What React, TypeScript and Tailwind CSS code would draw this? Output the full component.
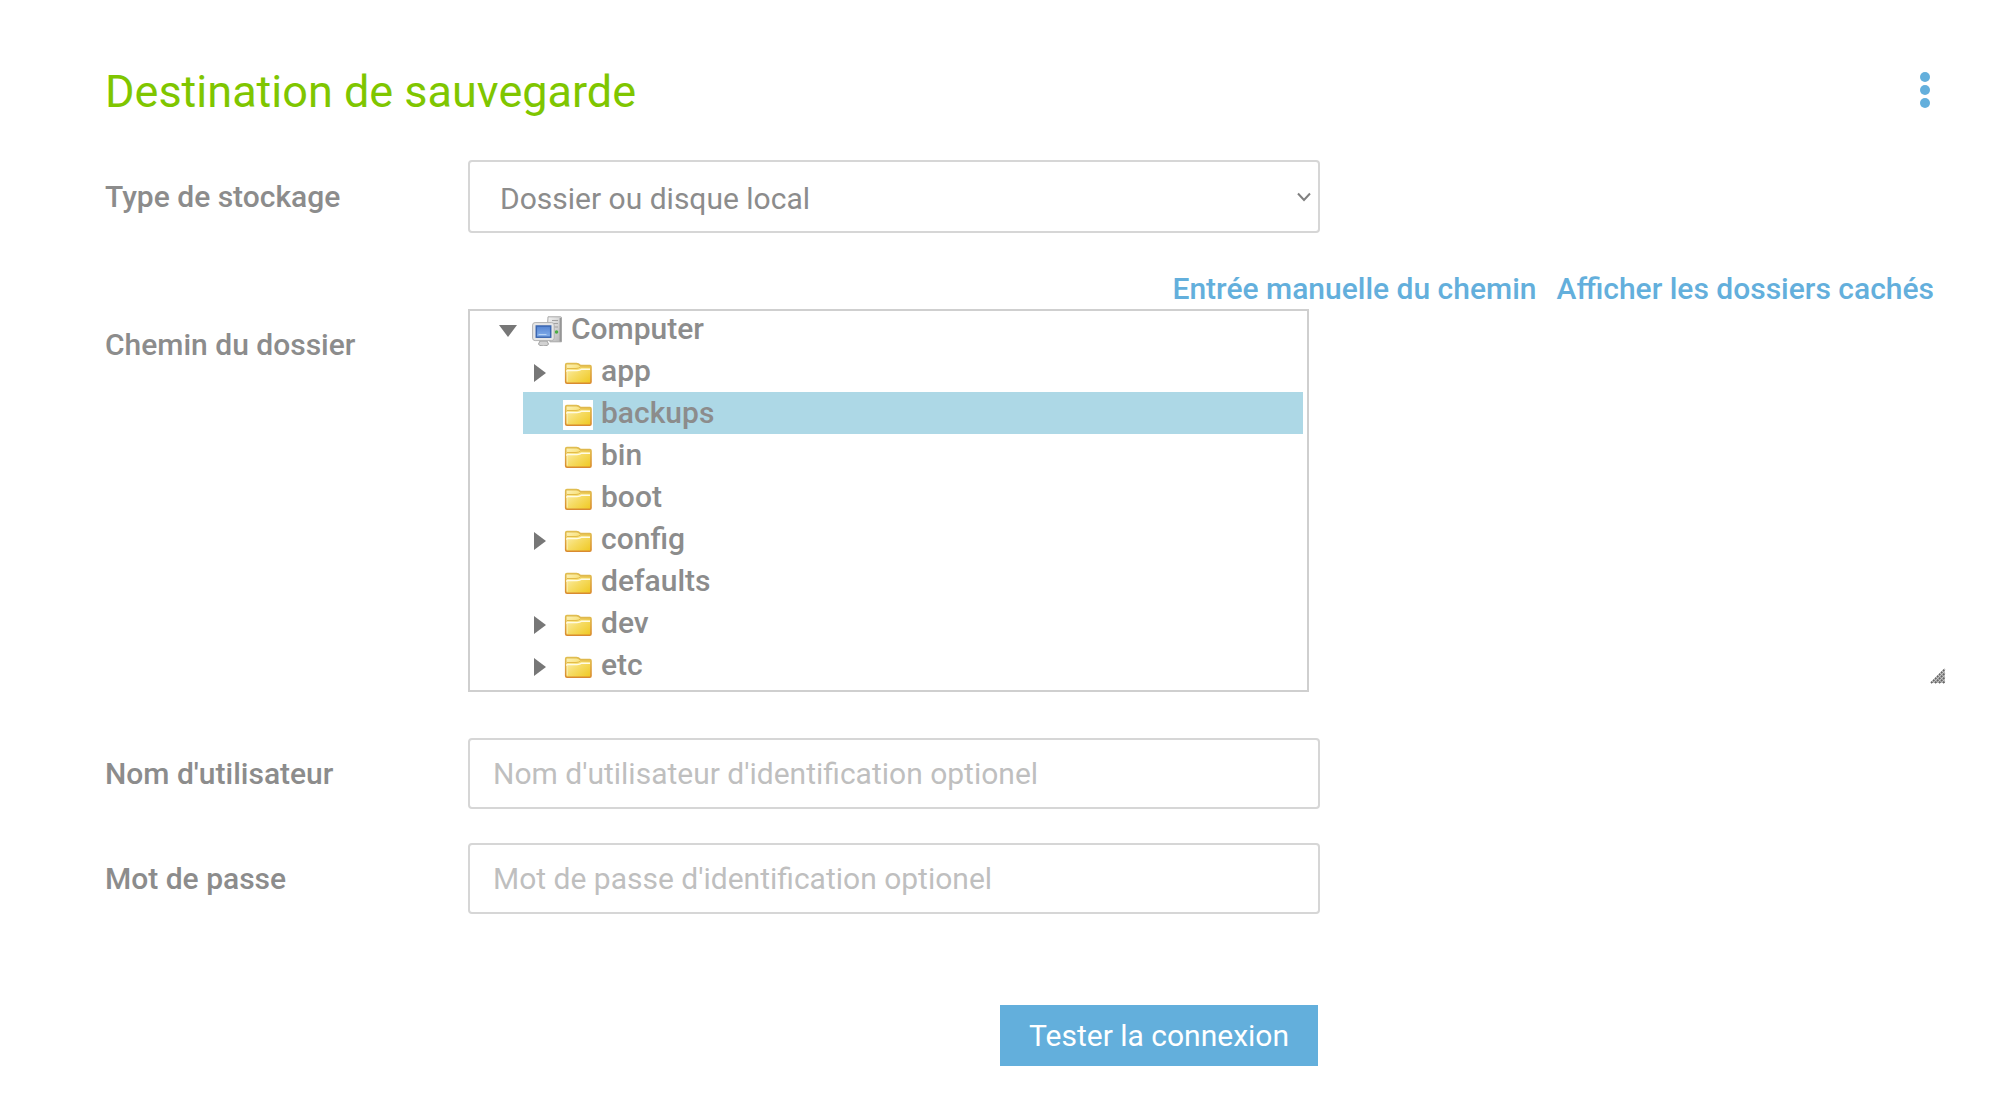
import React, { useState } from 'react';

interface Folder {
  name: string;
  hasChildren: boolean;
}

const folders: Folder[] = [
  { name: 'app', hasChildren: true },
  { name: 'backups', hasChildren: false },
  { name: 'bin', hasChildren: false },
  { name: 'boot', hasChildren: false },
  { name: 'config', hasChildren: true },
  { name: 'defaults', hasChildren: false },
  { name: 'dev', hasChildren: true },
  { name: 'etc', hasChildren: true },
];

const ComputerIcon = () => (
  <svg viewBox="0 0 30 30" className="h-[30px] w-[30px] shrink-0" aria-hidden="true">
    <defs>
      <linearGradient id="case" x1="0" y1="0" x2="1" y2="1">
        <stop offset="0" stopColor="#f4f4f4" />
        <stop offset="1" stopColor="#b4b4b4" />
      </linearGradient>
      <linearGradient id="screen" x1="0" y1="0" x2="0" y2="1">
        <stop offset="0" stopColor="#5584d2" />
        <stop offset="1" stopColor="#85b0ec" />
      </linearGradient>
    </defs>
    <path d="M16 .8h12.5q1 0 1 1v24H18L15 20z" fill="url(#case)" stroke="#a8a8a8" />
    <path d="M28.3 2v23.5" stroke="#969696" strokeWidth="1.4" />
    <path d="M20 4.5h6M20 7.5h6M22 11h4" stroke="#a2a2a2" strokeWidth="1.2" />
    <circle cx="24.5" cy="16" r="1.8" fill="#4aad43" />
    <path d="M8 25h7l1.5 3q0 2-5 2t-5-2z" fill="#d2d2d2" stroke="#a0a0a0" />
    <rect x=".6" y="6.6" width="21.6" height="18" rx="2.5" fill="#e6e6e6" stroke="#b2b2b2" />
    <rect x="4.3" y="10" width="14.4" height="11.2" fill="url(#screen)" stroke="#3b66b0" strokeWidth="1.5" />
    <path d="M6.5 18.5h8" stroke="#b7d3f5" strokeWidth="1" />
  </svg>
);

const FolderIcon = () => (
  <svg viewBox="0 0 30 30" className="h-[30px] w-[30px] shrink-0 bg-white" aria-hidden="true">
    <defs>
      <linearGradient id="folder" x1="0" y1="0" x2="1" y2="1">
        <stop offset="0" stopColor="#fdf3bd" />
        <stop offset=".5" stopColor="#f6dc66" />
        <stop offset="1" stopColor="#efc81f" />
      </linearGradient>
      <linearGradient id="folderEdge" x1="0" y1="0" x2="0" y2="1">
        <stop offset="0" stopColor="#e0bd50" />
        <stop offset="1" stopColor="#d98a30" />
      </linearGradient>
    </defs>
    <path
      d="M2.7 24V6.8Q2.7 5.6 3.9 5.6H13.5Q15.5 5.6 17.5 7.6H27Q28 7.6 28 8.8V24Q28 25.2 26.8 25.2H4Q2.7 25.2 2.7 24Z"
      fill="url(#folder)"
      stroke="url(#folderEdge)"
      strokeWidth="1.6"
    />
    <path d="M4 10.5H13Q15.5 10.5 17.5 9H27" fill="none" stroke="#e3bb48" />
    <path d="M4 14V12.6H14Q17 12.6 18.5 11.3H27" fill="none" stroke="#fffbe4" strokeWidth="1.4" />
    <path d="M4.2 13V23.5" stroke="#fdf0b0" />
  </svg>
);

interface ArrowProps {
  open: boolean;
}

const Arrow: React.FC<ArrowProps> = ({ open }) => (
  <svg viewBox="0 0 20 20" className="h-5 w-5" fill="#777" aria-hidden="true">
    <path d={open ? 'M1 4H19L10 16Z' : 'M5 1L17 10L5 19Z'} />
  </svg>
);

interface TextRowProps {
  id: string;
  label: string;
  type: string;
  placeholder: string;
}

const TextRow: React.FC<TextRowProps> = ({ id, label, type, placeholder }) => (
  <div className="flex items-center">
    <label htmlFor={id} className="w-[363px] shrink-0 font-medium">{label}</label>
    <input
      id={id}
      type={type}
      placeholder={placeholder}
      className="h-[71px] w-full max-w-[852px] rounded-sm border-2 border-[#d6d6d6] bg-white px-[23px] placeholder:text-[#bfbfbf] placeholder:opacity-100"
    />
  </div>
);

const App = () => {
  const [selected, setSelected] = useState('backups');
  const [isOpen, setIsOpen] = useState(true);

  return (
    <main className="bg-white pt-[62px] pr-[54px] pb-10 pl-[105px] font-['Roboto',sans-serif] text-[30px] leading-10 text-[#8c8c8c]">
      <header className="flex items-center justify-between pr-4">
        <h1 className="text-[45px] leading-[60px] text-[#7fc600]">Destination de sauvegarde</h1>
        <button type="button" aria-label="Menu" className="mb-1 flex flex-col gap-[3px] text-[#63afdc]">
          <span className="h-[10px] w-[10px] rounded-full bg-current" />
          <span className="h-[10px] w-[10px] rounded-full bg-current" />
          <span className="h-[10px] w-[10px] rounded-full bg-current" />
        </button>
      </header>

      <form className="mt-[38px]" onSubmit={e => e.preventDefault()}>
        <div className="flex items-center">
          <label htmlFor="storage" className="w-[363px] shrink-0 font-medium">Type de stockage</label>
          <div className="relative w-full max-w-[852px]">
            <select
              id="storage"
              className="block h-[73px] w-full appearance-none rounded-sm border-2 border-[#d6d6d6] bg-white pt-1 pr-10 pl-[30px]"
            >
              <option>Dossier ou disque local</option>
            </select>
            <svg
              viewBox="0 0 14 10"
              className="pointer-events-none absolute top-8 right-[9px] h-[10px] w-[14px]"
              fill="none"
              stroke="#808080"
              strokeWidth={2}
              aria-hidden="true"
            >
              <path d="M1 1.5L7 8L13 1.5" />
            </svg>
          </div>
        </div>

        <div className="mt-9 flex">
          <span id="path-label" className="w-[363px] shrink-0 pt-14 font-medium">Chemin du dossier</span>
          <div className="flex-1">
            <div className="flex justify-end gap-5 pr-3 font-medium text-[#63afdc]">
              <a href="#manual">Entrée manuelle du chemin</a>
              <a href="#hidden">Afficher les dossiers cachés</a>
            </div>
            <div className="flex items-end justify-between">
              <div
                role="tree"
                aria-labelledby="path-label"
                className="w-full max-w-[841px] border-2 border-[#cfcfcf] pr-1 pb-1 pl-[22px] font-medium"
              >
                <div role="treeitem" aria-expanded={isOpen} className="flex h-[39px] items-center">
                  <button
                    type="button"
                    aria-label="Computer"
                    className="w-10 pl-[6px]"
                    onClick={() => setIsOpen(!isOpen)}
                  >
                    <Arrow open={isOpen} />
                  </button>
                  <ComputerIcon />
                  <span className="pb-1 pl-[9px]">Computer</span>
                </div>
                {isOpen && (
                  <ul role="group" className="pl-[31px]">
                    {folders.map(folder => (
                      <li
                        key={folder.name}
                        role="treeitem"
                        aria-selected={folder.name === selected}
                        onClick={() => setSelected(folder.name)}
                        className={`flex h-[42px] cursor-pointer items-center ${
                          folder.name === selected ? 'bg-[#add8e6]' : ''
                        }`}
                      >
                        <span className="flex w-10 shrink-0 items-center pt-1 pl-[6px]">
                          {folder.hasChildren && <Arrow open={false} />}
                        </span>
                        <span className="shrink-0 pt-1">
                          <FolderIcon />
                        </span>
                        <span className="pl-2">{folder.name}</span>
                      </li>
                    ))}
                  </ul>
                )}
              </div>
              <svg viewBox="0 0 16 16" className="mb-2 h-4 w-4 shrink-0" fill="none" aria-hidden="true">
                <path d="M15 1V15H1Z" fill="#c4c4c4" />
                <path d="M1 15L15 1M5 15L15 5M9 15L15 9M13 15L15 13" stroke="#666" strokeWidth="1.8" strokeDasharray="2 .8" />
              </svg>
            </div>
          </div>
        </div>

        <div className="mt-[46px] flex flex-col gap-[34px]">
          <TextRow id="user" label="Nom d'utilisateur" type="text" placeholder="Nom d'utilisateur d'identification optionel" />
          <TextRow id="password" label="Mot de passe" type="password" placeholder="Mot de passe d'identification optionel" />
        </div>

        <div className="mt-[91px] ml-[363px] flex max-w-[850px] justify-end">
          <button type="submit" className="h-[61px] bg-[#63afdc] px-[29px] text-white">
            Tester la connexion
          </button>
        </div>
      </form>
    </main>
  );
};

export default App;
